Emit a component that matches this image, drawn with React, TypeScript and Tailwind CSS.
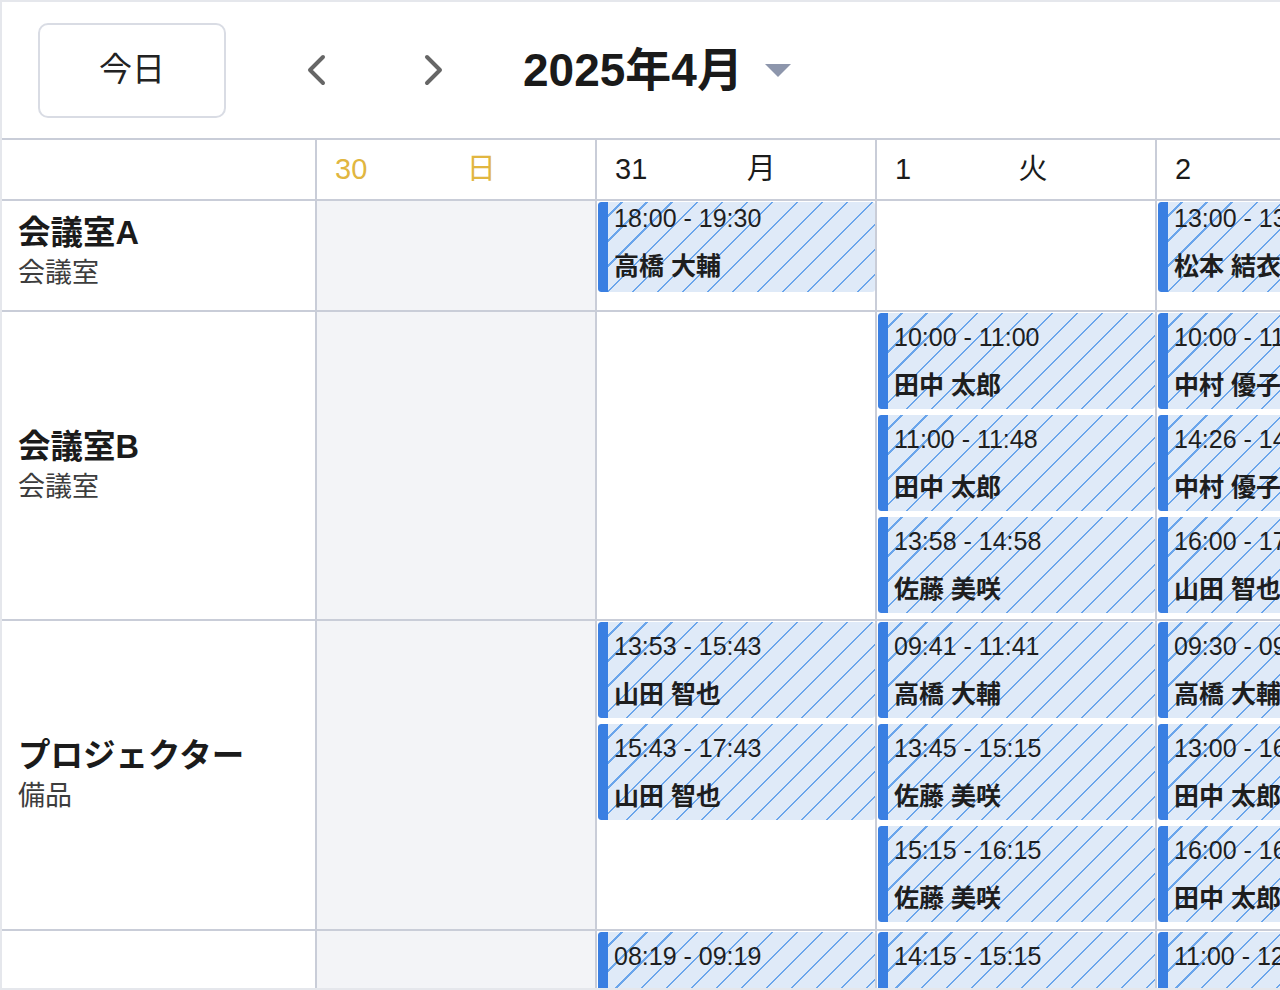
import React from 'react';

type Booking = { time: string; who: string };

type Resource = {
    name: string;
    kind: string;
    rowH: string;
    cardH: string;
    textFit: string;
    labelFit: string;
    days: Booking[][];
};

const days = [
    { date: '30', week: '日', sunday: true },
    { date: '31', week: '月', sunday: false },
    { date: '1', week: '火', sunday: false },
    { date: '2', week: '水', sunday: false },
];

const resources: Resource[] = [
    {
        name: '会議室A',
        kind: '会議室',
        rowH: 'h-[109px]',
        cardH: 'h-[90px]',
        textFit: 'leading-[48px] pb-[10px]',
        labelFit: 'pb-[8px]',
        days: [
            [],
            [{ time: '18:00 - 19:30', who: '高橋 大輔' }],
            [],
            [{ time: '13:00 - 13:45', who: '松本 結衣' }],
        ],
    },
    {
        name: '会議室B',
        kind: '会議室',
        rowH: 'h-[307px]',
        cardH: 'h-[96px]',
        textFit: 'leading-[48px]',
        labelFit: '',
        days: [
            [],
            [],
            [
                { time: '10:00 - 11:00', who: '田中 太郎' },
                { time: '11:00 - 11:48', who: '田中 太郎' },
                { time: '13:58 - 14:58', who: '佐藤 美咲' },
            ],
            [
                { time: '10:00 - 11:00', who: '中村 優子' },
                { time: '14:26 - 14:56', who: '中村 優子' },
                { time: '16:00 - 17:00', who: '山田 智也' },
            ],
        ],
    },
    {
        name: 'プロジェクター',
        kind: '備品',
        rowH: 'h-[308px]',
        cardH: 'h-[96px]',
        textFit: 'leading-[48px]',
        labelFit: '',
        days: [
            [],
            [
                { time: '13:53 - 15:43', who: '山田 智也' },
                { time: '15:43 - 17:43', who: '山田 智也' },
            ],
            [
                { time: '09:41 - 11:41', who: '高橋 大輔' },
                { time: '13:45 - 15:15', who: '佐藤 美咲' },
                { time: '15:15 - 16:15', who: '佐藤 美咲' },
            ],
            [
                { time: '09:30 - 09:50', who: '高橋 大輔' },
                { time: '13:00 - 16:00', who: '田中 太郎' },
                { time: '16:00 - 16:30', who: '田中 太郎' },
            ],
        ],
    },
    {
        name: '社用車',
        kind: '車両',
        rowH: 'h-[307px]',
        cardH: 'h-[96px]',
        textFit: 'leading-[48px]',
        labelFit: '',
        days: [
            [],
            [{ time: '08:19 - 09:19', who: '鈴木 健' }],
            [{ time: '14:15 - 15:15', who: '中村 優子' }],
            [{ time: '11:00 - 12:00', who: '松本 結衣' }],
        ],
    },
];

const BookingCard: React.FC<{ booking: Booking; height: string; textFit: string }> = ({ booking, height, textFit }) => (
    <div
        className={`${height} flex shrink-0 overflow-hidden rounded-[3px] bg-[repeating-linear-gradient(135deg,#dfeaf8_0px,#dfeaf8_16.2px,#6aa5eb_16.2px,#6aa5eb_17.7px)]`}
    >
        <div className="w-[10px] shrink-0 rounded-l-[3px] bg-[#3a7fe2]" />
        <div className={`flex min-w-0 flex-col justify-center whitespace-nowrap pl-[6px] text-[25px] text-[#1e1e1e] ${textFit}`}>
            <span>{booking.time}</span>
            <span className="font-semibold">{booking.who}</span>
        </div>
    </div>
);

export default function App() {
    return (
        <div className="flex h-[990px] w-[1280px] flex-col overflow-hidden border-b-2 border-l-2 border-t-2 border-[#e5e7ec] bg-white font-['Liberation_Sans','Noto_Sans_CJK_JP',sans-serif] text-[#1b1b1b]">
            {/* toolbar */}
            <div className="flex h-[136px] shrink-0 items-center pl-[36px]">
                <button className="flex h-[95px] w-[188px] items-center justify-center rounded-[10px] border-2 border-[#d9dce4] bg-white text-[33px] text-[#222]">
                    今日
                </button>
                <svg className="ml-[77px]" width="24" height="32" viewBox="0 0 24 32" fill="none">
                    <path d="M20 3 L7 16 L20 29" stroke="#666" strokeWidth="4" strokeLinecap="round" strokeLinejoin="round" />
                </svg>
                <svg className="ml-[96px]" width="24" height="32" viewBox="0 0 24 32" fill="none">
                    <path d="M4 3 L17 16 L4 29" stroke="#666" strokeWidth="4" strokeLinecap="round" strokeLinejoin="round" />
                </svg>
                <h1 className="ml-[76px] text-[46px] font-bold leading-none text-[#1a1a1a]">2025年4月</h1>
                <svg className="ml-[22px] mt-[2px]" width="26" height="14" viewBox="0 0 26 14">
                    <polygon points="0,0 26,0 13,13" fill="#8d96ac" />
                </svg>
            </div>

            {/* resource timeline */}
            <div className="grid grid-cols-[313px_278px_278px_278px_278px] gap-[2px] border-t-2 border-[#c9cdd8] bg-[#c9cdd8]">
                <div className="h-[59px] bg-white" />
                {days.map((d) => (
                    <div
                        key={d.date}
                        className={`flex h-[59px] items-center bg-white pl-[18px] pt-[1px] text-[29px] ${d.sunday ? 'text-[#e1b640]' : 'text-[#1b1b1b]'}`}
                    >
                        <span>{d.date}</span>
                        <span className="flex-1 text-center">{d.week}</span>
                    </div>
                ))}

                {resources.map((r) => (
                    <React.Fragment key={r.name}>
                        <div className={`${r.rowH} flex flex-col justify-center bg-white pl-[16px] ${r.labelFit}`}>
                            <div className="text-[32.5px] font-bold leading-[42px] text-[#1b1b1b]">{r.name}</div>
                            <div className="text-[27px] leading-[38px] text-[#3d3d3d]">{r.kind}</div>
                        </div>
                        {r.days.map((list, i) => (
                            <div
                                key={i}
                                className={`${r.rowH} flex flex-col gap-[6px] overflow-hidden pl-[1px] pt-[1px] ${days[i].sunday ? 'bg-[#f3f4f7]' : 'bg-white'}`}
                            >
                                {list.map((b, j) => (
                                    <BookingCard key={j} booking={b} height={r.cardH} textFit={r.textFit} />
                                ))}
                            </div>
                        ))}
                    </React.Fragment>
                ))}
            </div>
        </div>
    );
}
